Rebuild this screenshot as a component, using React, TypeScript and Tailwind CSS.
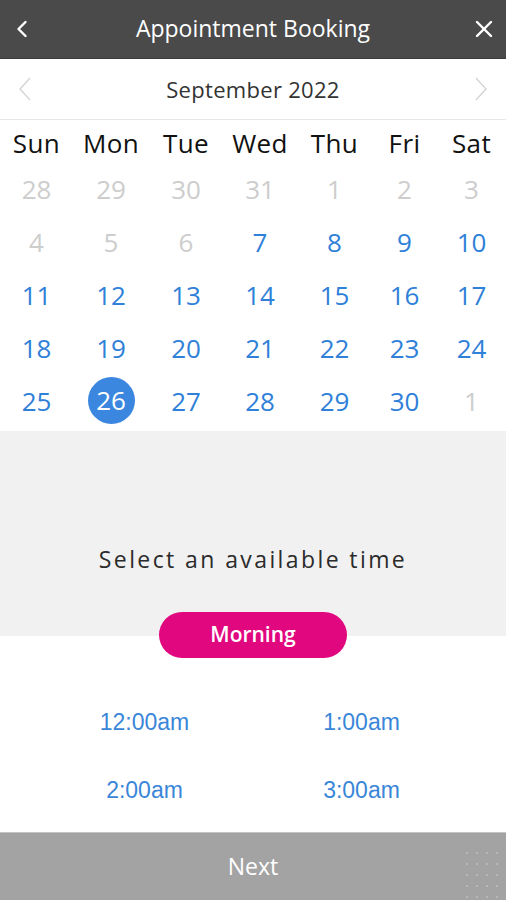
import { ChevronLeft, X } from "lucide-react";

const DAYS = ["Sun", "Mon", "Tue", "Wed", "Thu", "Fri", "Sat"];

// [day, inMonth]
const WEEKS: [number, boolean][][] = [
  [[28, false], [29, false], [30, false], [31, false], [1, false], [2, false], [3, false]],
  [[4, false], [5, false], [6, false], [7, true], [8, true], [9, true], [10, true]],
  [[11, true], [12, true], [13, true], [14, true], [15, true], [16, true], [17, true]],
  [[18, true], [19, true], [20, true], [21, true], [22, true], [23, true], [24, true]],
  [[25, true], [26, true], [27, true], [28, true], [29, true], [30, true], [1, false]],
];

const SLOTS = ["12:00am", "1:00am", "2:00am", "3:00am"];

const cols = "grid grid-cols-[73px_76px_74px_74px_75px_65px_69px]";

function Thin({ flip }: { flip?: boolean }) {
  return (
    <svg width="14" height="26" viewBox="0 0 14 26" className={flip ? "rotate-180" : ""}>
      <polyline points="12,2 2,13 12,24" fill="none" stroke="#d4d4d4" strokeWidth="1.4" />
    </svg>
  );
}

export default function App() {
  const selected = 26;

  return (
    <div className="w-[506px] h-[900px] flex flex-col bg-white font-['Open_Sans',sans-serif] overflow-hidden">
      {/* header */}
      <div className="h-[59px] shrink-0 bg-[#4a4a4a] border-b border-[#3a3a3a] flex items-center justify-between px-[8px] text-white">
        <ChevronLeft className="w-[28px] h-[28px]" strokeWidth={2.1} />
        <span className="text-[23px] leading-none pb-[1px]">Appointment Booking</span>
        <X className="w-[28px] h-[28px]" strokeWidth={2.1} />
      </div>

      {/* month switcher */}
      <div className="h-[61px] shrink-0 flex items-center justify-between pl-[18px] pr-[18px] border-b border-[#e6e6e6]">
        <Thin />
        <span className="text-[22px] text-[#333] tracking-[0.3px]">September 2022</span>
        <Thin flip />
      </div>

      {/* calendar */}
      <div className="shrink-0 pb-[4px]">
        <div className={`${cols} h-[42px] pt-[4px] items-center`}>
          {DAYS.map((d) => (
            <span key={d} className="text-center text-[26px] tracking-[0.4px] text-[#111] leading-none">
              {d}
            </span>
          ))}
        </div>
        {WEEKS.map((week, i) => (
          <div key={i} className={`${cols} h-[53px] items-center`}>
            {week.map(([n, inMonth], j) => {
              const isSel = inMonth && n === selected;
              return (
                <div key={j} className="flex justify-center">
                  {isSel ? (
                    <span className="w-[47px] h-[47px] rounded-full bg-[#3b87df] text-white text-[26px] flex items-center justify-center">
                      {n}
                    </span>
                  ) : (
                    <span
                      className={
                        inMonth
                          ? "text-[26px] text-[#2f80d8] leading-none"
                          : "text-[26px] text-[#cdcdcd] leading-none"
                      }
                    >
                      {n}
                    </span>
                  )}
                </div>
              );
            })}
          </div>
        ))}
      </div>

      {/* time select */}
      <div className="h-[181px] shrink-0 bg-[#f1f1f1] flex items-end justify-center pb-[36px]">
        <span className="text-[23px] tracking-[2.4px] text-[#2b2b2b]">Select an available time</span>
      </div>
      <div className="h-[46px] shrink-0 flex justify-center bg-[linear-gradient(to_bottom,#f1f1f1_24px,#ffffff_24px)]">
        <button className="w-[188px] h-[46px] rounded-full bg-[#e0077f] text-white text-[21px] font-semibold">
          Morning
        </button>
      </div>

      <div className="grid grid-cols-2 px-9 pt-[53px] gap-y-[45px] font-['Liberation_Sans',Arial,sans-serif]">
        {SLOTS.map((s) => (
          <span key={s} className="text-center text-[23px] leading-none text-[#3a86d8]">
            {s}
          </span>
        ))}
      </div>

      <div className="mt-auto h-[68px] shrink-0 bg-[#a3a3a3] border-t border-[#c4c4c4] flex items-center justify-center relative">
        <span className="text-[23px] text-white">Next</span>
        <svg className="absolute right-[4px] bottom-0" width="40" height="52" viewBox="0 0 40 52">
          {[0, 1, 2, 3, 4].map((r) =>
            [0, 1, 2, 3].map((c) => (
              <rect key={`${r}-${c}`} x={4 + c * 10} y={4 + r * 11} width="2" height="2" fill="#b8b8b8" />
            ))
          )}
        </svg>
      </div>
    </div>
  );
}
